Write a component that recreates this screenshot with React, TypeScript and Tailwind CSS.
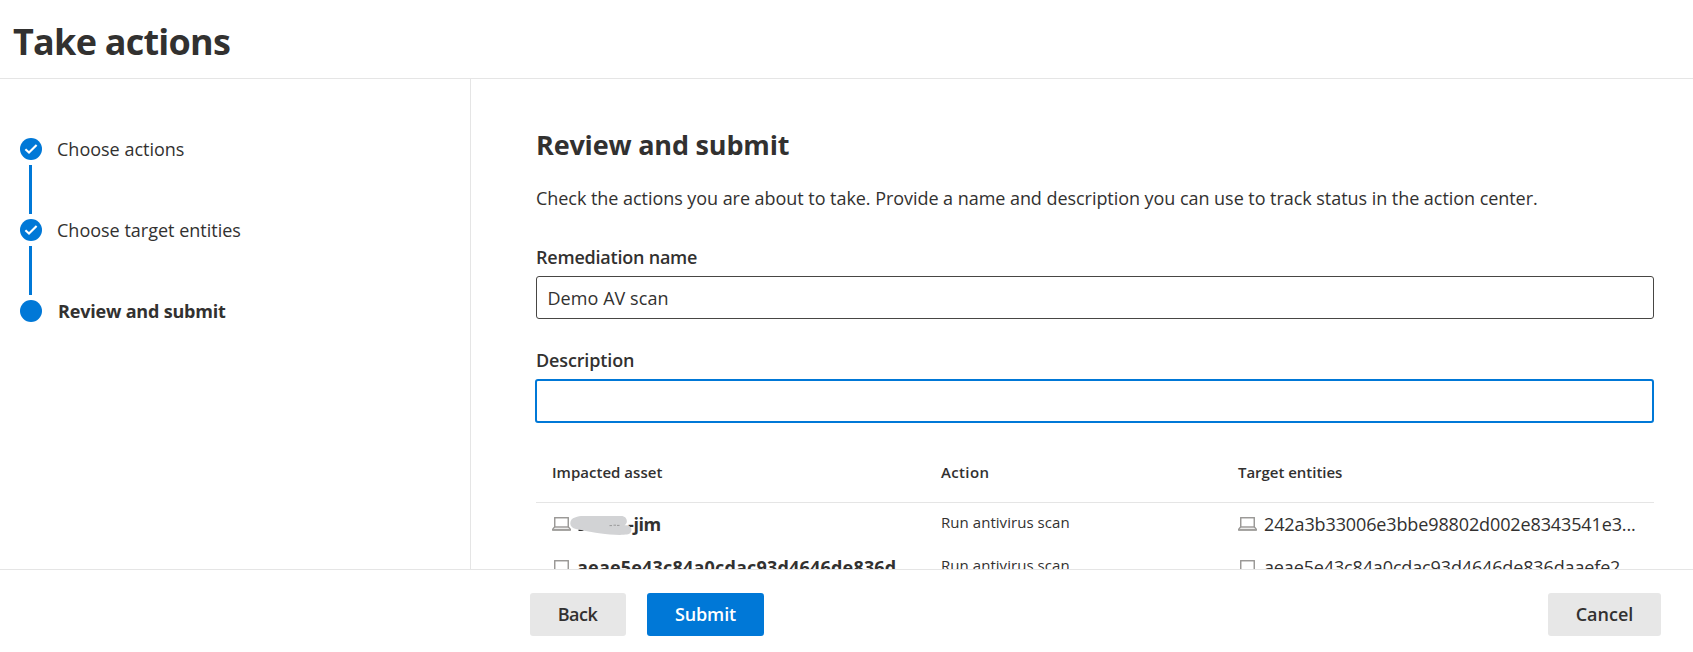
import React from "react";

function Laptop() {
  return (
    <svg className="mt-[5px] h-[14px] w-[19px] shrink-0" viewBox="0 0 19 14" fill="none">
      <rect x="2.75" y="0.75" width="13.5" height="9.25" stroke="#979593" strokeWidth="1.4" />
      <path d="M2.6 10 0.7 12.2V13.2H18.3V12.2L16.4 10" stroke="#979593" strokeWidth="1.3" />
      <path d="M1 12.7H18" stroke="#a19f9d" strokeWidth="1.8" />
    </svg>
  );
}

function StepDot({ done }: { done: boolean }) {
  return (
    <svg className="size-[22px] shrink-0" viewBox="0 0 22 22" fill="none">
      <circle cx="11" cy="11" r="11" fill="#0078d7" />
      {done && <path d="M5.4 11.2 9 14.6 16.6 6.9" stroke="#fff" strokeWidth="2.1" />}
    </svg>
  );
}

const steps = [
  { label: "Choose actions", done: true },
  { label: "Choose target entities", done: true },
  { label: "Review and submit", done: false },
];

function Redaction() {
  return (
    <span className="relative h-6 w-[49px] shrink-0">
      <svg className="absolute -left-2 top-1 h-5 w-[62px]" viewBox="0 0 62 20" fill="none">
        <path d="M8.5 14.2H13.5" stroke="#323130" strokeWidth="1.6" />
        <path
          d="M5 1.5C8 0 10 0 13 0H51C57.5 0 58.5 7 54.5 9.3H58C63 11 62.5 18 57 18.6C51 19.2 38 18.8 31 17.6C24 16.3 16 15.4 9 13.4C3 13 0.4 10.5 0.3 7.5C0.2 4.5 2 2.3 5 1.5Z"
          fill="#d2d3d5"
        />
        <path d="M39.5 9.6H42M43.5 9.2H46M47 9.4H49.5" stroke="#8a8a8a" strokeWidth="0.8" />
      </svg>
    </span>
  );
}

export default function App() {
  return (
    <div className="flex h-[652px] flex-col overflow-hidden bg-white font-['Open_Sans',sans-serif] text-lg/6 text-[#323130]">
      <header className="h-[79px] shrink-0 border-b border-[#e5e5e5] pl-[13px] pt-[18px]">
        <h1 className="text-4xl/[48px] font-bold tracking-[-0.76px]">Take actions</h1>
      </header>

      <div className="flex h-[490px] shrink-0 overflow-hidden">
        <nav className="w-[471px] shrink-0 border-r border-[#e5e5e5] pl-5 pt-[58px]">
          {steps.map((step, i) => (
            <div key={step.label}>
              <div className="flex h-6 items-center gap-[15px]">
                <StepDot done={step.done} />
                <span className={step.done ? "" : "pl-px font-bold tracking-[-0.19px]"}>{step.label}</span>
              </div>
              {i < steps.length - 1 && <div className="my-1 ml-[9px] h-[49px] w-[3px] bg-[#0078d7]" />}
            </div>
          ))}
        </nav>

        <main className="min-w-0 flex-1 pl-[65px] pr-[39px] pt-12">
          <h2 className="text-[27px]/9 font-bold tracking-[-0.18px]">Review and submit</h2>
          <p className="mt-[23px] tracking-[-0.049px]">
            Check the actions you are about to take. Provide a name and description you can use to track status in the
            action center.
          </p>

          <div className="mt-[35px] font-semibold tracking-[-0.22px]">Remediation name</div>
          <div className="mt-[7px] flex h-[43px] items-center rounded-[3px] border border-[#484644] px-[10.5px] pt-px tracking-[0.06px]">
            Demo AV scan
          </div>

          <div className="mt-[29px] font-semibold tracking-[-0.14px]">Description</div>
          <div className="-ml-px mt-[7px] h-11 rounded-[3px] border-2 border-[#0078d7]" />

          <div className="mt-[39px] grid grid-cols-[389px_297px_1fr] border-b border-[#e5e5e5] pb-5 pl-4 text-[15px]/5 font-semibold">
            <span className="tracking-[0.02px]">Impacted asset</span>
            <span className="tracking-[0.35px]">Action</span>
            <span className="tracking-[-0.03px]">Target entities</span>
          </div>

          <div className="grid h-[43px] grid-cols-[389px_297px_1fr] pl-4 pt-[9px]">
            <div className="flex gap-[7px]">
              <Laptop />
              <span className="flex font-bold">
                <Redaction />
                <span className="pl-px tracking-[-0.4px]">-jim</span>
              </span>
            </div>
            <span className="text-[15px]/5 tracking-[0.05px]">Run antivirus scan</span>
            <div className="flex gap-[7px]">
              <Laptop />
              <span className="tracking-[-0.12px]">242a3b33006e3bbe98802d002e8343541e3...</span>
            </div>
          </div>

          <div className="grid h-[43px] grid-cols-[389px_297px_1fr] pl-4 pt-[9px]">
            <div className="flex gap-[6px]">
              <Laptop />
              <span className="font-bold tracking-[0.19px]">aeae5e43c84a0cdac93d4646de836d</span>
            </div>
            <span className="text-[15px]/5 tracking-[0.05px]">Run antivirus scan</span>
            <div className="flex gap-[7px]">
              <Laptop />
              <span className="tracking-[-0.14px]">aeae5e43c84a0cdac93d4646de836daaefe2</span>
            </div>
          </div>
        </main>
      </div>

      <footer className="flex h-[83px] shrink-0 items-start border-t border-[#e5e5e5] pl-[530px] pr-8 pt-[23px] font-semibold">
        <button className="h-[43px] w-24 rounded-[3px] bg-[#e7e7e7] pb-0.5 pr-px tracking-[-0.5px]">Back</button>
        <button className="ml-[21px] h-[43px] w-[117px] rounded-[3px] bg-[#0078d7] pb-0.5 tracking-[-0.14px] text-white">
          Submit
        </button>
        <button className="ml-auto h-[43px] w-[113px] rounded-[3px] bg-[#e7e7e7] pb-0.5">Cancel</button>
      </footer>
    </div>
  );
}
